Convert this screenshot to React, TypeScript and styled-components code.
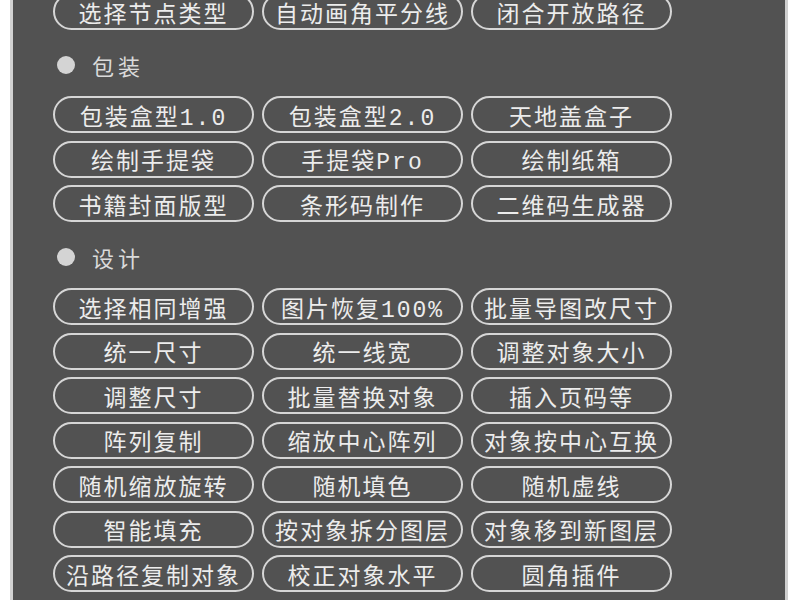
import React from 'react';
import styled, { createGlobalStyle } from 'styled-components';

//Styles
const GlobalStyle = createGlobalStyle`
  html, body {
    margin: 0;
    padding: 0;
    background: #ffffff;
    overflow: hidden;
  }
`;
const Page = styled.div`
  width: 800px;
  height: 600px;
  padding: 0 12px 0 10px;
  box-sizing: border-box;
  background: #ffffff;
`;
const Panel = styled.div`
  height: 100%;
  box-sizing: border-box;
  background: #525252;
  border-left: 3px solid #d2d2d2;
  border-right: 3px solid #cfcfcf;
  padding-left: 40px;
  overflow: hidden;
`;
const Inner = styled.div`
  margin-top: -7px;
`;
const ButtonGrid = styled.div`
  display: grid;
  grid-template-columns: repeat(3, 201px);
  column-gap: 8px;
  row-gap: 7.5px;
`;
const ToolButton = styled.div`
  height: 37px;
  box-sizing: border-box;
  border: 2px solid #d6d6d6;
  border-radius: 19px;
  display: flex;
  align-items: center;
  justify-content: center;
  color: #ececec;
  font-family: 'Liberation Mono', 'Noto Sans CJK SC', monospace;
  font-size: 23px;
  letter-spacing: 2px;
  white-space: nowrap;
  overflow: hidden;
`;
const SectionHeader = styled.div`
  height: 30px;
  margin: 20px 0 16px 4px;
  display: flex;
  align-items: center;
  gap: 17px;
`;
const Bullet = styled.span`
  width: 18px;
  height: 18px;
  border-radius: 50%;
  background: #d4d4d4;
`;
const SectionTitle = styled.span`
  color: #dadada;
  font-family: 'Noto Sans CJK SC', sans-serif;
  font-size: 22px;
  letter-spacing: 4px;
`;

//Data
const topTools = ['选择节点类型', '自动画角平分线', '闭合开放路径'];
const packTools = ['包装盒型1.0', '包装盒型2.0', '天地盖盒子', '绘制手提袋', '手提袋Pro', '绘制纸箱', '书籍封面版型', '条形码制作', '二维码生成器'];
const designTools = [
  '选择相同增强', '图片恢复100%', '批量导图改尺寸',
  '统一尺寸', '统一线宽', '调整对象大小',
  '调整尺寸', '批量替换对象', '插入页码等',
  '阵列复制', '缩放中心阵列', '对象按中心互换',
  '随机缩放旋转', '随机填色', '随机虚线',
  '智能填充', '按对象拆分图层', '对象移到新图层',
  '沿路径复制对象', '校正对象水平', '圆角插件',
];

const Tools = ({ items }: { items: string[] }) => (
  <ButtonGrid>
    {items.map((t) => (
      <ToolButton key={t}>{t}</ToolButton>
    ))}
  </ButtonGrid>
);

//JSX
export default function App() {
  return (
    <>
      <GlobalStyle />
      <Page>
        <Panel>
          <Inner>
            <Tools items={topTools} />
            <SectionHeader>
              <Bullet />
              <SectionTitle>包装</SectionTitle>
            </SectionHeader>
            <Tools items={packTools} />
            <SectionHeader>
              <Bullet />
              <SectionTitle>设计</SectionTitle>
            </SectionHeader>
            <Tools items={designTools} />
          </Inner>
        </Panel>
      </Page>
    </>
  );
}
